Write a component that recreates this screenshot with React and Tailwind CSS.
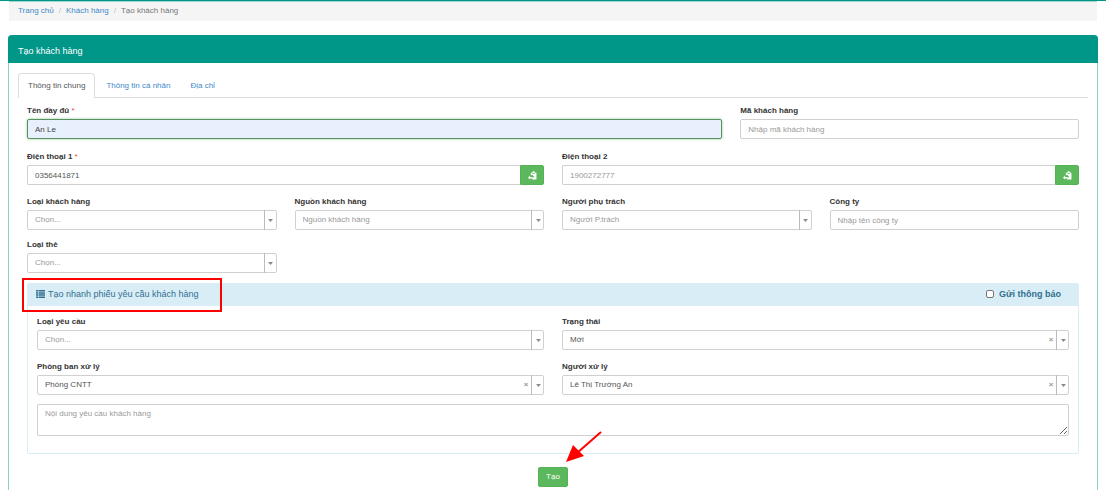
import React from "react";

const control =
  "block h-5 w-full rounded-xs border border-[#d0d0d0] bg-white px-[7px] text-[8px] leading-3 text-[#555] outline-none placeholder:text-[#999]";

function Label({ htmlFor, required, children }) {
  return (
    <label htmlFor={htmlFor} className="block h-[15px] text-[8px] leading-[14px] font-bold text-[#333]">
      {children}
      {required && <span className="font-normal text-[#e74c3c]"> *</span>}
    </label>
  );
}

function TextField({ id, label, required, className = "", highlighted, ...props }) {
  return (
    <div className={className}>
      <Label htmlFor={id} required={required}>{label}</Label>
      <input
        id={id}
        type="text"
        className={
          highlighted
            ? "block h-5 w-full rounded-xs border border-[#5a8f62] bg-[#e8f0fe] px-[7px] text-[8px] leading-3 text-[#444] shadow-[0_0_3px_#8fd09a] outline-none"
            : control
        }
        {...props}
      />
    </div>
  );
}

function PasteIcon() {
  return (
    <svg viewBox="0 0 16 16" className="size-[9px]" fill="currentColor" aria-hidden="true">
      <path d="M5 3h2.500a2.500 2.500 0 0 1 5 0H15v12H7.500v-2L11 10 7.500 6.500 5 8z" />
      <path d="M0 12l3.500-4v2.500H8v3H3.500V15z" />
      <path d="M7.500 4h5v1.200h-5z" fill="#5cb85c" />
    </svg>
  );
}

function PhoneField({ id, label, required, ...props }) {
  return (
    <div>
      <Label htmlFor={id} required={required}>{label}</Label>
      <div className="flex">
        <input
          id={id}
          type="text"
          className="block h-5 min-w-0 flex-1 rounded-l-xs border border-r-0 border-[#d0d0d0] bg-white px-[7px] text-[8px] leading-3 text-[#555] outline-none placeholder:text-[#999]"
          {...props}
        />
        <button
          type="button"
          aria-label="Dán"
          className="flex h-5 w-6 items-center justify-center rounded-r-xs border border-[#55b355] bg-[#5cb85c] text-white"
        >
          <PasteIcon />
        </button>
      </div>
    </div>
  );
}

function SelectField({ id, label, value, filled }) {
  return (
    <div>
      <Label htmlFor={id}>{label}</Label>
      <div className="relative">
        <select
          id={id}
          className={
            filled
              ? "block h-5 w-full appearance-none rounded-xs border border-[#d0d0d0] bg-white pr-8 pl-[7px] text-[8px] leading-3 text-[#555] outline-none"
              : "block h-5 w-full appearance-none rounded-xs border border-[#d0d0d0] bg-white pr-5 pl-[7px] text-[8px] leading-3 text-[#999] outline-none"
          }
        >
          <option>{value}</option>
        </select>
        {filled && (
          <button
            type="button"
            aria-label="Xóa"
            className="absolute inset-y-0 right-3 flex w-3 items-center justify-center text-[8px] leading-none font-bold text-[#999]"
          >
            ×
          </button>
        )}
        <span className="pointer-events-none absolute inset-y-0 right-0 flex w-[13px] items-center justify-center border-l border-[#bbb]">
          <svg viewBox="0 0 8 5" className="h-[3px] w-[5px]" fill="#888" aria-hidden="true">
            <path d="M0 0h8L4 5z" />
          </svg>
        </span>
      </div>
    </div>
  );
}

function ListIcon() {
  return (
    <svg viewBox="0 0 18 16" className="h-2 w-[9px]" fill="currentColor" aria-hidden="true">
      <path d="M0 0h4v3H0zM5 0h13v3H5zM0 4.300h4v3H0zM5 4.300h13v3H5zM0 8.600h4v3H0zM5 8.600h13v3H5zM0 13h4v3H0zM5 13h13v3H5z" />
    </svg>
  );
}

export default function App() {
  return (
    <div className="flex min-h-screen flex-col border-t border-[#009688] bg-white px-2 font-['Liberation_Sans',Arial,sans-serif] text-[8px] leading-3 text-[#333]">
      <nav aria-label="Breadcrumb" className="mx-px border-t border-[#9fd6d0] bg-[#f5f5f5] px-[9px] pt-[3px] pb-1">
        <ol className="flex">
          <li><a href="#home" className="text-[#428bca]">Trang chủ</a></li>
          <li className="px-[5px] text-[#bbb]">/</li>
          <li><a href="#customers" className="text-[#428bca]">Khách hàng</a></li>
          <li className="px-[5px] text-[#bbb]">/</li>
          <li className="text-[#777]">Tạo khách hàng</li>
        </ol>
      </nav>

      <main className="mt-[14px] flex flex-1 flex-col rounded-t-sm border-x border-[#8fd0ca]">
        <h1 className="-mx-px flex h-7 items-center rounded-t-sm bg-[#009688] px-[10px] pt-1 text-[9px] text-white">
          Tạo khách hàng
        </h1>

        <div className="px-[9px] pt-[10px]">
          <ul role="tablist" className="flex h-[25px] border-b border-[#ddd]">
            <li className="-mb-px">
              <button type="button" role="tab" aria-selected="true" className="h-[25px] rounded-t-sm border border-b-0 border-[#ddd] bg-white px-[9px] text-[#555]">
                Thông tin chung
              </button>
            </li>
            <li className="ml-0.5"><button type="button" role="tab" aria-selected="false" className="h-[25px] px-[9px] text-[#428bca]">Thông tin cá nhân</button></li>
            <li className="ml-0.5"><button type="button" role="tab" aria-selected="false" className="h-[25px] px-[9px] text-[#428bca]">Địa chỉ</button></li>
          </ul>

          <form className="px-[9px] pt-[6px]">
            <div className="grid grid-cols-12 gap-x-[18px]">
              <TextField id="name" label="Tên đầy đủ" required highlighted defaultValue="An Le" className="col-span-8" />
              <TextField id="code" label="Mã khách hàng" placeholder="Nhập mã khách hàng" className="col-span-4" />
            </div>
            <div className="mt-[11px] grid grid-cols-2 gap-x-[18px]">
              <PhoneField id="phone1" label="Điện thoại 1" required defaultValue="0356441871" />
              <PhoneField id="phone2" label="Điện thoại 2" placeholder="1900272777" />
            </div>
            <div className="mt-[10px] grid grid-cols-4 gap-x-[18px]">
              <SelectField id="type" label="Loại khách hàng" value="Chọn..." />
              <SelectField id="source" label="Nguồn khách hàng" value="Nguồn khách hàng" />
              <SelectField id="owner" label="Người phụ trách" value="Người P.trách" />
              <TextField id="company" label="Công ty" placeholder="Nhập tên công ty" />
            </div>
            <div className="mt-2 grid grid-cols-4 gap-x-[18px]">
              <SelectField id="card" label="Loại thẻ" value="Chọn..." />
            </div>

            <section className="mt-[10px] rounded-xs border border-[#d9edf7]">
              <div className="relative flex h-[22px] items-center justify-between bg-[#d9edf7] pr-[17px] pb-[2px] pl-2 text-[9px] text-[#31708f]">
                <h2 className="flex items-center gap-[3px]">
                  <ListIcon />
                  Tạo nhanh phiếu yêu cầu khách hàng
                </h2>
                <label htmlFor="notify" className="flex items-center gap-[5px] font-bold">
                  <input id="notify" type="checkbox" className="size-2 appearance-none rounded-xs border border-[#767676] bg-white" />
                  Gửi thông báo
                </label>
                <span className="pointer-events-none absolute -top-[6px] -left-[6px] h-[34px] w-[200px] border-2 border-[#f00]" />
              </div>
              <div className="px-[9px] pt-[9px] pb-[17px]">
                <div className="grid grid-cols-2 gap-x-[18px] gap-y-[10px]">
                  <SelectField id="request" label="Loại yêu cầu" value="Chọn..." />
                  <SelectField id="status" label="Trạng thái" value="Mới" filled />
                  <SelectField id="dept" label="Phòng ban xử lý" value="Phòng CNTT" filled />
                  <SelectField id="handler" label="Người xử lý" value="Lê Thị Trường An" filled />
                </div>
                <textarea
                  aria-label="Nội dung yêu cầu khách hàng"
                  placeholder="Nội dung yêu cầu khách hàng"
                  className="mt-[9px] block h-8 w-full rounded-xs border border-[#d0d0d0] bg-white px-[7px] py-[3px] text-[8px] leading-3 text-[#555] outline-none placeholder:text-[#999]"
                />
              </div>
            </section>

            <div className="mt-[13px] flex justify-center">
              <div className="relative">
                <button type="button" className="block h-5 w-[30px] rounded-xs border border-[#55b355] bg-[#5cb85c] text-[8px] leading-3 text-white">
                  Tạo
                </button>
                <svg viewBox="0 0 36 34" className="pointer-events-none absolute -top-9 left-[28px] h-[34px] w-9" aria-hidden="true">
                  <path d="M35 1L11 22" stroke="#f00" strokeWidth="2" />
                  <path d="M0 31L7 14L18 25z" fill="#f00" />
                </svg>
              </div>
            </div>
          </form>
        </div>
      </main>
    </div>
  );
}
